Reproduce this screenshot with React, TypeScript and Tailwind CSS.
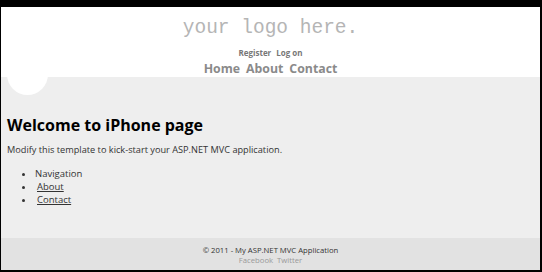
export default function App() {
  return (
    <div className="w-[542px] h-[272px] bg-black pt-[7px] pl-[1px] pr-[2px] pb-[2px] overflow-hidden">
      <div className="flex flex-col h-full relative font-['Open_Sans',sans-serif]">
        {/* header */}
        <header className="bg-white h-[70px] flex flex-col items-center shrink-0">
          <div className="mt-[9px] h-[24px] leading-[24px] text-[19.5px] text-[#b5b5b5] font-['Liberation_Mono',monospace]">
            your logo here.
          </div>
          <div className="mt-[7px] h-[12px] leading-[12px] text-[8px] font-bold text-[#777] flex gap-[5px]">
            <span>Register</span>
            <span>Log on</span>
          </div>
          <nav className="mt-[1px] h-[17px] leading-[17px] text-[12.3px] font-bold text-[#8a8a8a] flex gap-[6px]">
            <span>Home</span>
            <span>About</span>
            <span>Contact</span>
          </nav>
        </header>
        <div className="absolute left-[6px] top-[47px] w-[41px] h-[41px] rounded-full bg-white" />
        {/* content */}
        <main className="bg-[#eeeeee] flex-1 pl-[6px] pt-[38px] text-[#333]">
          <h1 className="text-[16px] leading-[20px] font-bold text-black">Welcome to iPhone page</h1>
          <p className="mt-[8px] text-[9.2px] leading-[14px]">
            Modify this template to kick-start your ASP.NET MVC application.
          </p>
          <ul className="mt-[10px] ml-[28px] list-disc text-[9.5px] leading-[13px]">
            <li>Navigation</li>
            <li>
              <a className="underline ml-[2px]">About</a>
            </li>
            <li>
              <a className="underline ml-[2px]">Contact</a>
            </li>
          </ul>
        </main>
        {/* footer */}
        <footer className="bg-[#e2e2e2] h-[32px] shrink-0 flex flex-col items-center pt-[7px] text-[7.7px] leading-[10px]">
          <div className="text-[#333]">© 2011 - My ASP.NET MVC Application</div>
          <div className="text-[#999] flex gap-[4px]">
            <span>Facebook</span>
            <span>Twitter</span>
          </div>
        </footer>
      </div>
    </div>
  );
}
